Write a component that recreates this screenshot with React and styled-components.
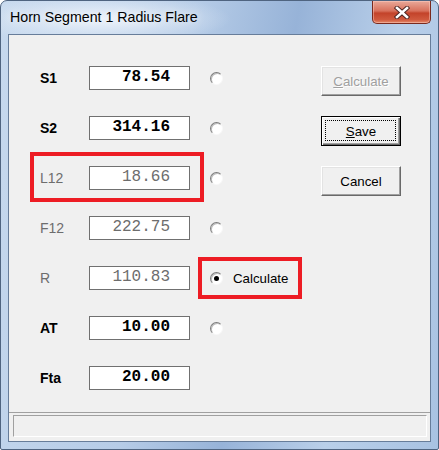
import React from 'react';
import styled, { createGlobalStyle } from 'styled-components';

const GlobalStyle = createGlobalStyle`
  html, body {
    margin: 0;
    padding: 0;
    background: #ffffff;
  }
  * {
    box-sizing: border-box;
  }
`;

const Window = styled.div`
    width: 439px;
    height: 450px;
    display: flex;
    flex-direction: column;
    padding: 0 7px 7px 7px;
    border: 1px solid #4f6480;
    border-radius: 7px 7px 2px 2px;
    background:
      radial-gradient(ellipse 130px 26px at 100px 18px, rgba(238, 244, 251, 0.95), rgba(238, 244, 251, 0) 100%),
      linear-gradient(100deg, #c7d9ee 0%, #b6cce7 38%, #97b3d8 58%, #b9cfe9 78%, #a8c2e2 100%);
    font-family: "Liberation Sans", Arial, sans-serif;
`;

const TitleBar = styled.div`
    height: 33px;
    display: flex;
    align-items: flex-start;
    flex-shrink: 0;
`;

const Title = styled.div`
    padding: 8px 0 0 2px;
    font-size: 14.2px;
    line-height: 16px;
    color: #000000;
    text-shadow: 0 0 8px rgba(255, 255, 255, 0.9);
`;

const CloseButton = styled.div`
    margin-left: auto;
    width: 59px;
    height: 23px;
    display: flex;
    align-items: center;
    justify-content: center;
    border: 1px solid #7a2a1e;
    border-top: none;
    border-radius: 0 0 5px 5px;
    background: linear-gradient(to bottom, #e9a99a 0%, #d8715c 45%, #c3432a 55%, #d05a3e 85%, #e58a6a 100%);
    box-shadow: inset 0 0 0 1px rgba(255, 210, 200, 0.45);
`;

const Client = styled.div`
    position: relative;
    flex: 1;
    display: flex;
    flex-direction: column;
    border: 1px solid #677d9a;
    background: #f0f0f0;
`;

const Main = styled.div`
    flex: 1;
    display: flex;
    justify-content: space-between;
    padding: 31px 29px 0 31px;
`;

const Fields = styled.div`
    display: flex;
    flex-direction: column;
    gap: 26px;
`;

const Row = styled.div`
    display: flex;
    align-items: center;
    height: 24px;
`;

const Label = styled.div`
    width: 49px;
    font-size: 14px;
    font-weight: ${({ disabled }) => (disabled ? 'normal' : 'bold')};
    color: ${({ disabled }) => (disabled ? '#6d6d6d' : '#000000')};
`;

const ValueBox = styled.div`
    width: 101px;
    height: 24px;
    display: flex;
    align-items: center;
    justify-content: flex-end;
    padding: 0 19px 2px 0;
    border: 1px solid #707070;
    background: #ffffff;
    font-family: "Liberation Mono", "Courier New", monospace;
    font-size: 16px;
    font-weight: ${({ disabled }) => (disabled ? 'normal' : 'bold')};
    color: ${({ disabled }) => (disabled ? '#6d6d6d' : '#000000')};
`;

const Radio = styled.span`
    position: relative;
    width: 13px;
    height: 13px;
    margin-left: 20px;
    border-radius: 50%;
    border: 1px solid;
    border-color: #7c7c7c #f8f8f8 #f8f8f8 #7c7c7c;
    box-shadow: inset 1px 1px 0 #bcbcbc;
    background: #ffffff;
    &::after {
      content: '';
      display: ${({ checked }) => (checked ? 'block' : 'none')};
      position: absolute;
      left: 3px;
      top: 3px;
      width: 5px;
      height: 5px;
      border-radius: 50%;
      background: #000000;
    }
`;

const RadioText = styled.span`
    margin-left: 10px;
    font-size: 13.3px;
    color: #000000;
`;

const Buttons = styled.div`
    display: flex;
    flex-direction: column;
    gap: 20px;
`;

const Button = styled.div`
    position: relative;
    width: 80px;
    height: 30px;
    display: flex;
    align-items: center;
    justify-content: center;
    font-size: 13.3px;
    color: ${({ disabled }) => (disabled ? '#a0a0a0' : '#000000')};
    text-shadow: ${({ disabled }) => (disabled ? '1px 1px 0 #ffffff' : 'none')};
    background: #f0f0f0;
    border: 1px solid;
    border-color: ${({ isDefault }) => (isDefault ? '#000000' : '#ffffff #696969 #696969 #ffffff')};
    box-shadow: ${({ isDefault }) => (isDefault
    ? 'inset 1px 1px 0 #ffffff, inset -1px -1px 0 #696969, inset -2px -2px 0 #a0a0a0'
    : 'inset -1px -1px 0 #a0a0a0, inset 1px 1px 0 #e3e3e3')};
    &::after {
      content: '';
      display: ${({ isDefault }) => (isDefault ? 'block' : 'none')};
      position: absolute;
      inset: 3px 4px 4px 3px;
      border: 1px dotted #000000;
    }
`;

const StatusBar = styled.div`
    height: 29px;
    padding: 2px 3px 4px 4px;
    border-top: 1px solid #a0a0a0;
    flex-shrink: 0;
`;

const StatusPanel = styled.div`
    height: 100%;
    border: 1px solid;
    border-color: #a0a0a0 #ffffff #ffffff #a0a0a0;
`;

const Highlight = styled.div`
    position: absolute;
    border: 4px solid #ed1c24;
    pointer-events: none;
`;

const rows = [
  { name: 'S1', value: '78.54' },
  { name: 'S2', value: '314.16' },
  { name: 'L12', value: '18.66', disabled: true },
  { name: 'F12', value: '222.75', disabled: true },
  { name: 'R', value: '110.83', disabled: true, checked: true },
  { name: 'AT', value: '10.00' },
  { name: 'Fta', value: '20.00', noRadio: true },
];

const CloseIcon = () => (
  <svg width="16" height="13" viewBox="0 0 16 13">
    <path d="M3 2 L13 11 M13 2 L3 11" stroke="#4a2320" strokeWidth="4.4" strokeLinecap="square" />
    <path d="M3 2 L13 11 M13 2 L3 11" stroke="#ffffff" strokeWidth="2.6" strokeLinecap="square" />
  </svg>
);

const App = () => (
  <>
    <GlobalStyle />
    <Window>
      <TitleBar>
        <Title>Horn Segment 1 Radius Flare</Title>
        <CloseButton>
          <CloseIcon />
        </CloseButton>
      </TitleBar>
      <Client>
        <Main>
          <Fields>
            {rows.map((row) => (
              <Row key={row.name}>
                <Label disabled={row.disabled}>{row.name}</Label>
                <ValueBox disabled={row.disabled}>{row.value}</ValueBox>
                {!row.noRadio && <Radio checked={row.checked} />}
                {row.checked && <RadioText>Calculate</RadioText>}
              </Row>
            ))}
          </Fields>
          <Buttons>
            <Button disabled>
              <span><u>C</u>alculate</span>
            </Button>
            <Button isDefault>
              <span><u>S</u>ave</span>
            </Button>
            <Button>Cancel</Button>
          </Buttons>
        </Main>
        <StatusBar>
          <StatusPanel />
        </StatusBar>
        <Highlight style={{ left: 21, top: 117, width: 174, height: 50 }} />
        <Highlight style={{ left: 189, top: 222, width: 104, height: 42 }} />
      </Client>
    </Window>
  </>
);

export default App;
